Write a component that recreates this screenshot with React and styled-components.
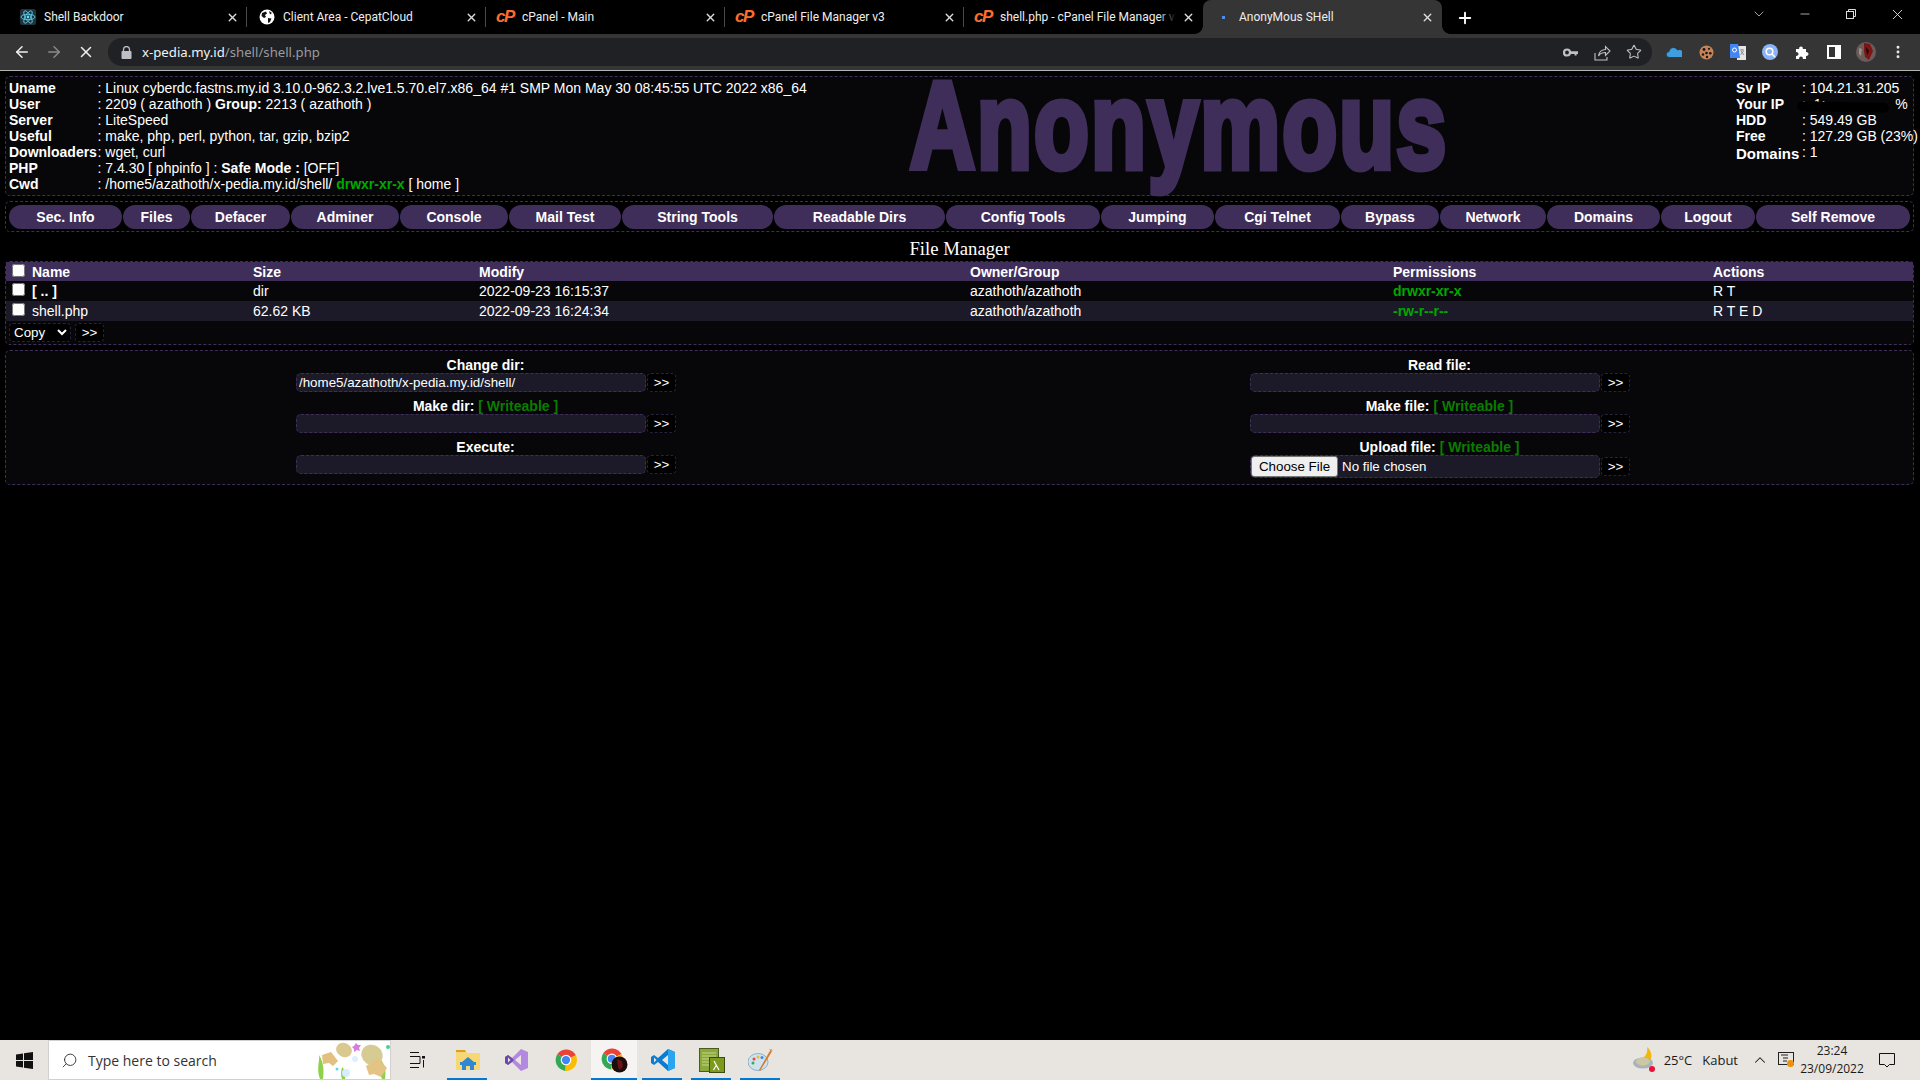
import React from "react";
import styled, { createGlobalStyle } from "styled-components";
import { ArrowLeft, ArrowRight, X, Plus, Star, Minus, ChevronDown, ChevronUp, Search, EllipsisVertical } from "lucide-react";

const purple = "#3f2e5a";

const GlobalStyle = createGlobalStyle`
  html, body { margin: 0; padding: 0; height: 100%; background: #000; }
  body { font-family: "Liberation Sans", Arial, sans-serif; font-size: 14px; color: #fff; overflow: hidden; }
  * { box-sizing: border-box; }
`;

const Screen = styled.div`
  width: 1920px;
  height: 1080px;
  display: flex;
  flex-direction: column;
  background: #000;
`;

/* browser chrome */
const TabStrip = styled.div`
  height: 34px;
  flex: none;
  display: flex;
  align-items: stretch;
  padding-left: 8px;
  background: #000;
`;

const Tab = styled.div`
  position: relative;
  width: 239px;
  flex: none;
  display: flex;
  align-items: center;
  padding: 0 8px 0 12px;
  font-family: "Roboto", sans-serif;
  font-size: 12px;
  color: #eee;
  white-space: nowrap;
  background: ${(p) => (p.$active ? "#353535" : "transparent")};
  border-radius: 8px 8px 0 0;

  &::after {
    content: "";
    display: ${(p) => (p.$sep ? "block" : "none")};
    position: absolute;
    right: 0;
    top: 7px;
    bottom: 7px;
    width: 1px;
    background: #4a4a4a;
  }
`;

const TabFlare = styled.span`
  position: absolute;
  bottom: 0;
  ${(p) => (p.$side === "left" ? "left: -8px;" : "right: -8px;")}
  width: 8px;
  height: 8px;
  background: radial-gradient(circle at ${(p) => (p.$side === "left" ? "0 0" : "100% 0")}, #000 7.5px, #353535 8px);
`;

const TabIcon = styled.span`
  width: 16px;
  height: 16px;
  flex: none;
  margin-right: 8px;
  display: flex;
  align-items: center;
  justify-content: center;
`;

const CpanelMark = styled.span`
  font: italic bold 17px "Liberation Sans", sans-serif;
  letter-spacing: -1.5px;
  color: #ff6c2c;
  margin-left: -2px;
`;

const TabTitle = styled.span`
  flex: 1;
  overflow: hidden;
  position: relative;
`;

const TabFade = styled.span`
  position: absolute;
  right: 0;
  top: 0;
  bottom: 0;
  width: 18px;
  background: linear-gradient(to right, transparent, #000);
`;

const TabClose = styled(X)`
  flex: none;
  width: 13px;
  height: 13px;
  stroke-width: 2.6;
  color: #ddd;
  margin-left: 6px;
`;

const NewTab = styled.div`
  width: 46px;
  display: flex;
  align-items: center;
  justify-content: center;
  padding-top: 1px;
`;

const WindowControls = styled.div`
  margin-left: auto;
  display: flex;
  height: 28px;
  color: #eee;
`;

const WinButton = styled.div`
  width: 46px;
  display: flex;
  align-items: center;
  justify-content: center;
`;

const Toolbar = styled.div`
  height: 37px;
  flex: none;
  display: flex;
  align-items: center;
  padding-left: 6px;
  background: #353535;
  border-bottom: 1px solid #b5b5b5;
`;

const NavButton = styled.div`
  width: 32px;
  height: 32px;
  display: flex;
  align-items: center;
  justify-content: center;
  color: ${(p) => (p.$off ? "#8a8a8a" : "#f1f1f1")};
`;

const UrlBar = styled.div`
  width: 1544px;
  height: 28px;
  margin-left: 6px;
  display: flex;
  align-items: center;
  padding-left: 13px;
  background: #202124;
  border-radius: 14px;
  font-family: "Noto Sans", sans-serif;
  font-size: 13.2px;
  color: #9a9b9e;
`;

const UrlLock = styled.span`
  display: flex;
  margin-right: 10px;
`;

const UrlHost = styled.span`
  color: #f1f3f4;
`;

const UrlActions = styled.div`
  margin-left: auto;
  display: flex;
  align-items: center;
  padding-right: 2px;
`;

const ToolSlot = styled.div`
  width: 32px;
  height: 28px;
  display: flex;
  align-items: center;
  justify-content: center;
  color: #bdc1c6;
  flex: none;
`;

const Extensions = styled.div`
  display: flex;
  align-items: center;
  margin-left: 6px;
`;

/* the shell page */
const Page = styled.main`
  flex: 1;
  padding: 5px 6px 0 5px;
  min-height: 0;
`;

const DashedBox = styled.section`
  border: 1px dashed ${purple};
  border-radius: 5px;
  background: ${(p) => p.$bg || "#070709"};
`;

const InfoBox = styled(DashedBox)`
  height: 120px;
  display: grid;
  grid-template-columns: 901px 1fr 177px;
  padding: 3px 0 0 3px;
  overflow: visible;
`;

const InfoRow = styled.div`
  display: flex;
  height: 16px;
  line-height: 16px;
  white-space: nowrap;
  ${(p) => p.$tall && "height: 20px; align-items: flex-start;"}
`;

const InfoLabel = styled.b`
  width: ${(p) => p.$w}px;
  flex: none;
  ${(p) => p.$drop && "padding-top: 2px; font-size: 15px;"}
`;

const Green = styled.span`
  color: #00a800;
  font-weight: bold;
`;

/* no Impact here: a stretched, heavily stroked Liberation stands in for it */
const Logo = styled.div`
  font-family: "Liberation Sans", sans-serif;
  font-weight: bold;
  font-size: 123px;
  line-height: 110px;
  letter-spacing: 3px;
  color: ${purple};
  -webkit-text-stroke: 7px ${purple};
  white-space: nowrap;
  margin-top: -9px;
  transform: scaleX(0.73);
  transform-origin: 0 0;
  clip-path: inset(-20px -20px -5px -20px);
`;

const Redacted = styled.span`
  position: relative;
  white-space: pre;
`;

const Scribble = styled.span`
  position: absolute;
  left: -5px;
  top: 6px;
  width: 92px;
  height: 10px;
  background: #000;
  border-radius: 5px;
  transform: rotate(1deg);
  filter: blur(0.6px);
`;

const MenuBar = styled(DashedBox)`
  margin-top: 5px;
  height: 31px;
  display: flex;
  gap: 1px;
  padding: 3px 0 0 3px;
  background: #000;
`;

const MenuItem = styled.a`
  width: ${(p) => p.$w}px;
  height: 24px;
  flex: none;
  display: flex;
  align-items: center;
  justify-content: center;
  background: ${purple};
  border-radius: 12px;
  font-weight: bold;
  color: #fff;
  cursor: pointer;
`;

const PageTitle = styled.h1`
  margin: 0;
  height: 29px;
  padding-top: 4px;
  text-align: center;
  font: normal 18.72px/25px "Liberation Serif", "Times New Roman", serif;
`;

const TableBox = styled(DashedBox)`
  height: 84px;
`;

const FileRow = styled.div`
  height: ${(p) => (p.$head ? 19 : 20)}px;
  display: grid;
  grid-template-columns: 26px 221px 226px 491px 423px 320px 1fr;
  align-items: center;
  background: ${(p) => (p.$head ? purple : p.$alt ? "#1c1a29" : "transparent")};
  font-weight: ${(p) => (p.$head ? "bold" : "normal")};
`;

const Check = styled.input.attrs({ type: "checkbox" })`
  width: 13px;
  height: 13px;
  margin: -3px 0 0 6px;
  display: block;
`;

const CopyBar = styled.div`
  display: flex;
  gap: 4px;
  padding: 2px 0 0 3px;
`;

const CopySelect = styled.select`
  width: 62px;
  height: 19px;
  background: #000;
  color: #fff;
  border: 1px dashed #2a2140;
  border-radius: 4px;
  font: 13.33px "Liberation Sans", sans-serif;
  padding: 0;
`;

const GoButton = styled.button`
  width: 29px;
  height: 19px;
  flex: none;
  padding: 0;
  background: #000;
  color: #fff;
  border: 1px dashed #2a2140;
  border-radius: 4px;
  font: 13.33px "Liberation Sans", sans-serif;
  cursor: pointer;
`;

const ToolsBox = styled(DashedBox)`
  margin-top: 5px;
  height: 135px;
  padding: 6px 0 0 3px;
  display: grid;
  grid-template-columns: 954px 1fr;
`;

const ToolsColumn = styled.div`
  width: 379px;
  margin-left: 287px;
`;

const ToolForm = styled.form`
  margin: 0 0 6px;
`;

const ToolLabel = styled.div`
  height: 15px;
  line-height: 17px;
  text-align: center;
  font-weight: bold;
`;

const Writeable = styled.span`
  color: #0a7d00;
`;

const ToolLine = styled.div`
  display: flex;
  align-items: center;
  margin-top: 1px;
  gap: 1px;
`;

const TextField = styled.input`
  width: 350px;
  height: 19px;
  flex: none;
  padding: 0 2px;
  background: #1c1a29;
  color: #fff;
  border: 1px dashed ${purple};
  border-radius: 5px;
  font: 13.33px "Liberation Sans", sans-serif;
  outline: none;
`;

const FileField = styled.input.attrs({ type: "file" })`
  width: 350px;
  height: 23px;
  flex: none;
  padding: 0;
  background: #1c1a29;
  color: #fff;
  border: 1px dashed ${purple};
  border-radius: 5px;
  font: 13.33px "Liberation Sans", sans-serif;

  &::file-selector-button {
    width: 87px;
    height: 21px;
    margin-right: 4px;
    padding: 0;
    background: #efefef;
    color: #000;
    border: 1px solid #767676;
    border-radius: 3px;
    font: 13.33px "Liberation Sans", sans-serif;
  }
`;

/* windows taskbar */
const Taskbar = styled.footer`
  height: 40px;
  flex: none;
  display: flex;
  align-items: stretch;
  background: #e8e5e1;
  color: #1a1a1a;
  font-family: "Open Sans", sans-serif;
`;

const StartButton = styled.div`
  width: 48px;
  flex: none;
  display: flex;
  align-items: center;
  justify-content: center;
`;

const SearchBox = styled.div`
  width: 343px;
  flex: none;
  display: flex;
  align-items: center;
  padding-left: 12px;
  background: #fff;
  border: 1px solid #d0d0d0;
  font-size: 14px;
  color: #333;
  overflow: hidden;
`;

const SearchGlass = styled(Search)`
  transform: scaleX(-1);
  flex: none;
`;

const SearchText = styled.span`
  margin-left: 10px;
  flex: 1;
`;

const TaskView = styled.div`
  width: 52px;
  flex: none;
  display: flex;
  align-items: center;
  justify-content: center;
`;

const TaskSlot = styled.div`
  position: relative;
  width: ${(p) => p.$w || 49}px;
  margin-right: ${(p) => p.$gap || 0}px;
  flex: none;
  display: flex;
  align-items: center;
  justify-content: center;
  background: ${(p) => (p.$active ? "#f5f4f2" : "transparent")};

  &::after {
    content: "";
    display: ${(p) => (p.$open ? "block" : "none")};
    position: absolute;
    bottom: 0;
    left: ${(p) => (p.$active ? 0 : 4)}px;
    right: ${(p) => (p.$active ? 0 : 5)}px;
    height: 2px;
    background: #0078d4;
  }
`;

const Tray = styled.div`
  margin-left: auto;
  display: flex;
  align-items: center;
  font-size: 13px;
`;

const TrayText = styled.span`
  margin-left: ${(p) => p.$ml}px;
  white-space: nowrap;
`;

const TrayIcon = styled.span`
  margin-left: ${(p) => p.$ml}px;
  display: flex;
  align-items: center;
`;

const Clock = styled.div`
  width: 76px;
  margin-left: -1px;
  text-align: center;
  font-size: 12px;
  line-height: 18px;
`;

const ReactFav = () => (
  <svg width="16" height="16" viewBox="0 0 16 16">
    <rect width="16" height="16" rx="2" fill="#20323a" />
    <g fill="none" stroke="#61dafb" strokeWidth="0.8">
      <ellipse cx="8" cy="8" rx="7" ry="2.7" />
      <ellipse cx="8" cy="8" rx="7" ry="2.7" transform="rotate(60 8 8)" />
      <ellipse cx="8" cy="8" rx="7" ry="2.7" transform="rotate(120 8 8)" />
    </g>
    <circle cx="8" cy="8" r="1.4" fill="#61dafb" />
  </svg>
);

const GlobeFav = () => (
  <svg width="16" height="16" viewBox="0 0 16 16">
    <circle cx="8" cy="8" r="7.5" fill="#fff" />
    <path d="M3 4 L7 2.5 L8 4.5 L6 6 L7 8 L5 9 L2.5 7 Z M9 9 L12.5 9.5 L11 13 L9 14 Z M10 2 L13 4 L11 5.5 Z" fill="#111" />
  </svg>
);

const LockIcon = () => (
  <svg width="11" height="13" viewBox="0 0 11 13">
    <path d="M2.5 5V3.5a3 3 0 0 1 6 0V5" fill="none" stroke="#bdc1c6" strokeWidth="1.3" />
    <rect x="0.5" y="5" width="10" height="8" rx="1" fill="#bdc1c6" />
  </svg>
);

const KeyIcon = () => (
  <svg width="15" height="9" viewBox="0 0 15 9">
    <circle cx="4" cy="4.5" r="3" fill="none" stroke="#bdc1c6" strokeWidth="2.2" />
    <path d="M7 3.3h8v2.6h-1.4v1.6h-2V5.9H7z" fill="#bdc1c6" />
  </svg>
);

const ShareIcon = () => (
  <svg width="17" height="17" viewBox="0 0 17 17" fill="none" stroke="#bdc1c6" strokeWidth="1.1">
    <path d="M1 9v7h12v-3" />
    <path d="M4.5 12c.5-4 3.500-6.500 7-6.500V2.500L16 7l-4.500 4.500V8.500c-3 0-5.500 1-7 3.500z" />
  </svg>
);

const CloudIcon = () => (
  <svg width="16" height="11" viewBox="0 0 16 11">
    <path d="M3.500 10.500a3 3 0 0 1-.5-6 4.500 4.500 0 0 1 8.500-1.500 3.800 3.800 0 0 1 4 7.500z" fill="#3f9fdc" stroke="#123" strokeWidth="0.6" />
  </svg>
);

const CookieIcon = () => (
  <svg width="15" height="15" viewBox="0 0 15 15">
    <circle cx="7.500" cy="7.500" r="7" fill="#c58358" />
    <g fill="#1d1410">
      <circle cx="5" cy="4.500" r="1.400" />
      <circle cx="10" cy="3.800" r="1.100" />
      <circle cx="7.500" cy="8" r="1.300" />
      <circle cx="11.300" cy="8.300" r="1.300" />
      <circle cx="4" cy="9.500" r="1.200" />
      <circle cx="8" cy="12" r="1.200" />
    </g>
  </svg>
);

const TranslateIcon = () => (
  <svg width="16" height="16" viewBox="0 0 16 16">
    <rect x="7" y="2" width="9" height="14" fill="#e6e6e6" />
    <path d="M10 6h4M12 5v1M10.500 11l3-4M11 7l3 4" stroke="#777" strokeWidth="0.8" fill="none" />
    <path d="M0 0h8l2 14H0z" fill="#4285f4" />
    <circle cx="4.500" cy="6" r="2" fill="none" stroke="#fff" strokeWidth="1" />
  </svg>
);

const LensIcon = () => (
  <svg width="16" height="16" viewBox="0 0 16 16">
    <circle cx="8" cy="8" r="8" fill="#8ab4f8" />
    <circle cx="7.500" cy="7.500" r="3.300" fill="none" stroke="#fff" strokeWidth="1.500" />
    <path d="M10 10l3 3" stroke="#fff" strokeWidth="1.500" />
  </svg>
);

const PuzzleIcon = () => (
  <svg width="15" height="15" viewBox="0 0 15 15">
    <path d="M1 4h3.200a1.900 1.900 0 1 1 3.600 0H11v3.200a1.900 1.900 0 1 1 0 3.600V14H7.800a1.900 1.900 0 1 0-3.600 0H1v-3.200a1.900 1.900 0 1 0 0-3.600z" fill="#fff" />
  </svg>
);

const SideIcon = () => (
  <svg width="14" height="14" viewBox="0 0 14 14">
    <rect x="0" y="0" width="14" height="14" fill="#fff" />
    <rect x="2" y="2" width="6" height="10" fill="#353535" />
  </svg>
);

const AvatarIcon = () => (
  <svg width="20" height="20" viewBox="0 0 20 20">
    <circle cx="10" cy="10" r="10" fill="#6b5b5b" />
    <path d="M8 1l6 1 3 7-4 9-4-3-1-6z" fill="#7c1414" />
    <path d="M3 6l3 1-1 7-2-2z" fill="#9a8f8a" />
    <path d="M10 5l3 4-2 4z" fill="#160606" />
  </svg>
);

const RestoreIcon = () => (
  <svg width="10" height="10" viewBox="0 0 10 10" fill="none" stroke="#ddd">
    <rect x="0.500" y="2.500" width="7" height="7" />
    <path d="M2.500 2.500v-2h7v7h-2" />
  </svg>
);

const WindowsIcon = () => (
  <svg width="17" height="17" viewBox="0 0 17 17" fill="#111">
    <path d="M0 2.400 7 1.400V8H0zM8 1.200 17 0V8H8zM0 9h7v6.600L0 14.600zM8 9h9v8l-9-1.200z" />
  </svg>
);

const Doodle = () => (
  <svg width="76" height="38" viewBox="0 0 76 38">
    <g fill="#8fd14f">
      <path d="M6 38 C2 28 6 20 5 14 C10 22 10 30 9 38z" />
      <path d="M28 38 C26 32 28 28 28 26 C32 30 32 34 31 38z" />
      <path d="M68 38 C64 30 68 24 66 18 C72 24 72 32 71 38z" />
    </g>
    <ellipse cx="30" cy="9" rx="8" ry="7" fill="#d9c98f" transform="rotate(25 30 9)" />
    <path d="M8 14l9-3 7 9-5 5-4-3-6 1z" fill="#e2c07f" />
    <ellipse cx="58" cy="14" rx="11" ry="10" fill="#d5cb93" transform="rotate(35 58 14)" />
    <path d="M52 25l12-8 9 10-6 9-7-3-5 1z" fill="#e3c484" />
    <path d="M40 5l2-3 2 2 3 0-2 3 1 3-3-1-3 2 0-3-2-2z" fill="#d77be0" />
    <circle cx="74" cy="6" r="2" fill="#4fd08a" />
    <circle cx="41" cy="18" r="3" fill="#dcefff" />
    <circle cx="32" cy="32" r="4" fill="#d6eefc" />
    <circle cx="23" cy="28" r="1.500" fill="#63d3ee" />
  </svg>
);

const TaskViewIcon = () => (
  <svg width="16" height="16" viewBox="0 0 16 16" fill="none" stroke="#111" strokeWidth="1">
    <path d="M1 .5h9M1 15.500h9M1 4.500h10v7H1" />
    <rect x="13" y="4" width="3" height="2.500" fill="#111" stroke="none" />
    <path d="M14.500 8v7.500" />
  </svg>
);

const ExplorerIcon = () => (
  <svg width="24" height="22" viewBox="0 0 24 22">
    <path d="M0 1h9l2 3h13v17H0z" fill="#f8d775" />
    <path d="M0 1h9l1 2H0z" fill="#d9a021" />
    <path d="M6 13l6-5 6 5v8h-4v-4h-4v4H6z" fill="#2f88d0" />
    <rect x="4" y="13" width="16" height="3" fill="#2f88d0" />
  </svg>
);

const StudioIcon = () => (
  <svg width="24" height="24" viewBox="0 0 24 24">
    <path d="M16 1l7 3v16l-7 3-9-9-4 3-3-2V9l3-2 4 3z" fill="#b388e0" />
    <path d="M16 7v10l-6-5z" fill="#e8e5e1" />
    <path d="M0 9l3-2 4 3 2 2-2 2-4 3-3-2z" fill="#6e4aa8" />
    <path d="M3 9.500v5l2.500-2.500z" fill="#e8e5e1" />
  </svg>
);

const ChromeIcon = ({ size = 22 }) => (
  <svg width={size} height={size} viewBox="0 0 24 24">
    <path d="M12 12 L2.600 5.500 A12 12 0 0 1 22.800 6.800z" fill="#ea4335" />
    <path d="M12 12 L22.800 6.800 A12 12 0 0 1 11 23.900z" fill="#fbbc04" />
    <path d="M12 12 L11 23.900 A12 12 0 0 1 2.600 5.500z" fill="#34a853" />
    <circle cx="12" cy="12" r="5.800" fill="#fff" />
    <circle cx="12" cy="12" r="4.500" fill="#4285f4" />
  </svg>
);

const ChromeProfileIcon = () => (
  <svg width="27" height="26" viewBox="0 0 27 26">
    <g transform="translate(0 1) scale(0.9)">
      <path d="M12 12 L2.600 5.500 A12 12 0 0 1 22.800 6.800z" fill="#ea4335" />
      <path d="M12 12 L22.800 6.800 A12 12 0 0 1 11 23.900z" fill="#fbbc04" />
      <path d="M12 12 L11 23.900 A12 12 0 0 1 2.600 5.500z" fill="#34a853" />
      <circle cx="12" cy="12" r="5.800" fill="#fff" />
      <circle cx="12" cy="12" r="4.500" fill="#4285f4" />
    </g>
    <circle cx="18.500" cy="17.500" r="8" fill="#1d0c0c" />
    <path d="M16 12l5 2 1 5-3 4-2-3z" fill="#6c1414" />
  </svg>
);

const VscodeIcon = () => (
  <svg width="24" height="24" viewBox="0 0 24 24">
    <path d="M17 1l7 3v16l-7 3-10-9-4 3-3-2v-6l3-2 4 3z" fill="#0c7cd0" />
    <path d="M17 1l7 3v16l-7 3z" fill="#2ba4ef" />
    <path d="M17 7v10l-6-5z" fill="#e8e5e1" />
    <path d="M3 9.500v5l2.500-2.500z" fill="#e8e5e1" />
  </svg>
);

const LambdaIcon = () => (
  <svg width="26" height="25" viewBox="0 0 26 25">
    <rect x="0.500" y="0.500" width="19" height="23" fill="#8aa83c" stroke="#4a5a20" />
    <path d="M3 5h14M3 8h14M3 11h14M3 14h8M3 17h8" stroke="#c6d888" />
    <rect x="10.500" y="9.500" width="15" height="15" fill="#7d9a1f" stroke="#3d4a14" />
    <path d="M15 13l5 9M17.500 17l-3 5" stroke="#fff" strokeWidth="1.200" fill="none" />
  </svg>
);

const PaintIcon = () => (
  <svg width="25" height="25" viewBox="0 0 25 25">
    <ellipse cx="10" cy="14" rx="10" ry="8.500" fill="#cfe3ef" stroke="#8fb2c6" />
    <circle cx="6" cy="11" r="1.500" fill="#e44" />
    <circle cx="10" cy="9" r="1.500" fill="#eb3" />
    <circle cx="5" cy="15" r="1.500" fill="#4a4" />
    <circle cx="14" cy="9.500" r="1.500" fill="#48d" />
    <path d="M23 1l1.500 1.500L12 23l-1-1z" fill="#d87a24" />
    <path d="M21 1h3v3z" fill="#c8b28a" />
  </svg>
);

const WeatherIcon = () => (
  <svg width="22" height="26" viewBox="0 0 22 26">
    <path d="M14 0c4 3 6 9 3 14l-8-2c4-3 6-7 5-12z" fill="#f4b80a" />
    <ellipse cx="10" cy="16" rx="10" ry="5.500" fill="#a9b3b8" />
    <ellipse cx="10" cy="14.500" rx="7" ry="4" fill="#ccc6a4" />
    <circle cx="19" cy="22" r="3" fill="#e81136" />
  </svg>
);

const NetworkIcon = () => (
  <svg width="17" height="16" viewBox="0 0 17 16">
    <rect x="0.500" y="0.500" width="15" height="12" fill="none" stroke="#222" />
    <path d="M3 3h7M5 6h5M5 9h4" stroke="#222" strokeWidth="1" />
    <circle cx="12.500" cy="11.500" r="3.500" fill="#f0900a" />
  </svg>
);

const NotifyIcon = () => (
  <svg width="16" height="15" viewBox="0 0 16 15" fill="none" stroke="#111">
    <path d="M.5.500h15v11h-5l-2.500 2.500-2.500-2.500h-5z" />
  </svg>
);

const tabs = [
  { title: "Shell Backdoor", icon: <ReactFav />, sep: true },
  { title: "Client Area - CepatCloud", icon: <GlobeFav />, sep: true },
  { title: "cPanel - Main", icon: <CpanelMark>cP</CpanelMark>, sep: true },
  { title: "cPanel File Manager v3", icon: <CpanelMark>cP</CpanelMark>, sep: true },
  { title: "shell.php - cPanel File Manager v3", icon: <CpanelMark>cP</CpanelMark>, fade: true },
];

const menu = [
  ["Sec. Info", 113], ["Files", 67], ["Defacer", 99], ["Adminer", 108], ["Console", 108],
  ["Mail Test", 112], ["String Tools", 151], ["Readable Dirs", 171], ["Config Tools", 154],
  ["Jumping", 113], ["Cgi Telnet", 125], ["Bypass", 98], ["Network", 106], ["Domains", 113],
  ["Logout", 94], ["Self Remove", 154],
];

const serverInfo = [
  ["Sv IP", ": 104.21.31.205"],
  ["HDD", ": 549.49 GB"],
  ["Free", ": 127.29 GB (23%)"],
];

const ToolField = ({ label, writeable, value }) => (
  <ToolForm onSubmit={(e) => e.preventDefault()}>
    <ToolLabel>
      {label}: {writeable && <Writeable>[ Writeable ]</Writeable>}
    </ToolLabel>
    <ToolLine>
      <TextField defaultValue={value} />
      <GoButton>&gt;&gt;</GoButton>
    </ToolLine>
  </ToolForm>
);

export default function App() {
  return (
    <Screen>
      <GlobalStyle />
      <TabStrip>
        {tabs.map((t) => (
          <Tab key={t.title} $sep={t.sep}>
            <TabIcon>{t.icon}</TabIcon>
            <TabTitle>
              {t.title}
              {t.fade && <TabFade />}
            </TabTitle>
            <TabClose />
          </Tab>
        ))}
        <Tab $active>
          <TabFlare $side="left" />
          <TabIcon>
            <svg width="3" height="3"><rect width="3" height="3" fill="#4d8eea" /></svg>
          </TabIcon>
          <TabTitle>AnonyMous SHell</TabTitle>
          <TabClose />
          <TabFlare $side="right" />
        </Tab>
        <NewTab><Plus size={18} strokeWidth={2.5} /></NewTab>
        <WindowControls>
          <WinButton><ChevronDown size={16} strokeWidth={1} /></WinButton>
          <WinButton><Minus size={14} strokeWidth={1.2} /></WinButton>
          <WinButton><RestoreIcon /></WinButton>
          <WinButton><X size={17} strokeWidth={1.2} /></WinButton>
        </WindowControls>
      </TabStrip>

      <Toolbar>
        <NavButton><ArrowLeft size={18} strokeWidth={2} /></NavButton>
        <NavButton $off><ArrowRight size={18} strokeWidth={2} /></NavButton>
        <NavButton><X size={18} strokeWidth={2} /></NavButton>
        <UrlBar>
          <UrlLock><LockIcon /></UrlLock>
          <UrlHost>x-pedia.my.id</UrlHost>/shell/shell.php
          <UrlActions>
            <ToolSlot><KeyIcon /></ToolSlot>
            <ToolSlot><ShareIcon /></ToolSlot>
            <ToolSlot><Star size={16} strokeWidth={1.6} /></ToolSlot>
          </UrlActions>
        </UrlBar>
        <Extensions>
          <ToolSlot><CloudIcon /></ToolSlot>
          <ToolSlot><CookieIcon /></ToolSlot>
          <ToolSlot><TranslateIcon /></ToolSlot>
          <ToolSlot><LensIcon /></ToolSlot>
          <ToolSlot><PuzzleIcon /></ToolSlot>
          <ToolSlot><SideIcon /></ToolSlot>
          <ToolSlot><AvatarIcon /></ToolSlot>
          <ToolSlot><EllipsisVertical size={16} color="#e8eaed" strokeWidth={2.4} /></ToolSlot>
        </Extensions>
      </Toolbar>

      <Page>
        <InfoBox>
          <div>
            <InfoRow><InfoLabel $w={88.5}>Uname</InfoLabel>: Linux cyberdc.fastns.my.id 3.10.0-962.3.2.lve1.5.70.el7.x86_64 #1 SMP Mon May 30 08:45:55 UTC 2022 x86_64</InfoRow>
            <InfoRow><InfoLabel $w={88.5}>User</InfoLabel>: 2209 ( azathoth ) <b>&nbsp;Group:</b>&nbsp;2213 ( azathoth )</InfoRow>
            <InfoRow><InfoLabel $w={88.5}>Server</InfoLabel>: LiteSpeed</InfoRow>
            <InfoRow><InfoLabel $w={88.5}>Useful</InfoLabel>: make, php, perl, python, tar, gzip, bzip2</InfoRow>
            <InfoRow><InfoLabel $w={88.5}>Downloaders</InfoLabel>: wget, curl</InfoRow>
            <InfoRow><InfoLabel $w={88.5}>PHP</InfoLabel>: 7.4.30 [ phpinfo ] : <b>&nbsp;Safe Mode :</b>&nbsp;[OFF]</InfoRow>
            <InfoRow><InfoLabel $w={88.5}>Cwd</InfoLabel>: /home5/azathoth/x-pedia.my.id/shell/&nbsp;<Green>drwxr-xr-x</Green>&nbsp;[ home ]</InfoRow>
          </div>
          <Logo>Anonymous</Logo>
          <div>
            <InfoRow><InfoLabel $w={66}>{serverInfo[0][0]}</InfoLabel>{serverInfo[0][1]}</InfoRow>
            <InfoRow>
              <InfoLabel $w={66}>Your IP</InfoLabel>
              <Redacted>
                {":  1:            .     %"}
                <Scribble />
              </Redacted>
            </InfoRow>
            <InfoRow><InfoLabel $w={66}>{serverInfo[1][0]}</InfoLabel>{serverInfo[1][1]}</InfoRow>
            <InfoRow><InfoLabel $w={66}>{serverInfo[2][0]}</InfoLabel>{serverInfo[2][1]}</InfoRow>
            <InfoRow $tall><InfoLabel $w={66} $drop>Domains</InfoLabel>: 1</InfoRow>
          </div>
        </InfoBox>

        <MenuBar>
          {menu.map(([label, w]) => (
            <MenuItem key={label} $w={w}>{label}</MenuItem>
          ))}
        </MenuBar>

        <PageTitle>File Manager</PageTitle>

        <TableBox>
          <FileRow $head>
            <Check /><span>Name</span><span>Size</span><span>Modify</span><span>Owner/Group</span><span>Permissions</span><span>Actions</span>
          </FileRow>
          <FileRow>
            <Check /><b>[ .. ]</b><span>dir</span><span>2022-09-23 16:15:37</span><span>azathoth/azathoth</span><Green>drwxr-xr-x</Green><span>R T</span>
          </FileRow>
          <FileRow $alt>
            <Check /><span>shell.php</span><span>62.62 KB</span><span>2022-09-23 16:24:34</span><span>azathoth/azathoth</span><Green>-rw-r--r--</Green><span>R T E D</span>
          </FileRow>
          <CopyBar>
            <CopySelect defaultValue="Copy"><option>Copy</option><option>Delete</option></CopySelect>
            <GoButton>&gt;&gt;</GoButton>
          </CopyBar>
        </TableBox>

        <ToolsBox>
          <ToolsColumn>
            <ToolField label="Change dir" value="/home5/azathoth/x-pedia.my.id/shell/" />
            <ToolField label="Make dir" writeable />
            <ToolField label="Execute" />
          </ToolsColumn>
          <ToolsColumn>
            <ToolField label="Read file" />
            <ToolField label="Make file" writeable />
            <ToolForm onSubmit={(e) => e.preventDefault()}>
              <ToolLabel>Upload file: <Writeable>[ Writeable ]</Writeable></ToolLabel>
              <ToolLine>
                <FileField />
                <GoButton>&gt;&gt;</GoButton>
              </ToolLine>
            </ToolForm>
          </ToolsColumn>
        </ToolsBox>
      </Page>

      <Taskbar>
        <StartButton><WindowsIcon /></StartButton>
        <SearchBox>
          <SearchGlass size={17} strokeWidth={1.3} />
          <SearchText>Type here to search</SearchText>
          <Doodle />
        </SearchBox>
        <TaskView><TaskViewIcon /></TaskView>
        <TaskSlot $open><ExplorerIcon /></TaskSlot>
        <TaskSlot><StudioIcon /></TaskSlot>
        <TaskSlot $gap={1}><ChromeIcon /></TaskSlot>
        <TaskSlot $open $active $w={46} $gap={1}><ChromeProfileIcon /></TaskSlot>
        <TaskSlot $open><VscodeIcon /></TaskSlot>
        <TaskSlot $open><LambdaIcon /></TaskSlot>
        <TaskSlot $open><PaintIcon /></TaskSlot>
        <Tray>
          <WeatherIcon />
          <TrayText $ml={9}>25°C</TrayText>
          <TrayText $ml={10}>Kabut</TrayText>
          <TrayIcon $ml={13}><ChevronUp size={18} strokeWidth={1.4} /></TrayIcon>
          <TrayIcon $ml={9}><NetworkIcon /></TrayIcon>
          <Clock>23:24<br />23/09/2022</Clock>
          <TrayIcon $ml={9}><NotifyIcon /></TrayIcon>
          <TrayIcon $ml={25} />
        </Tray>
      </Taskbar>
    </Screen>
  );
}
